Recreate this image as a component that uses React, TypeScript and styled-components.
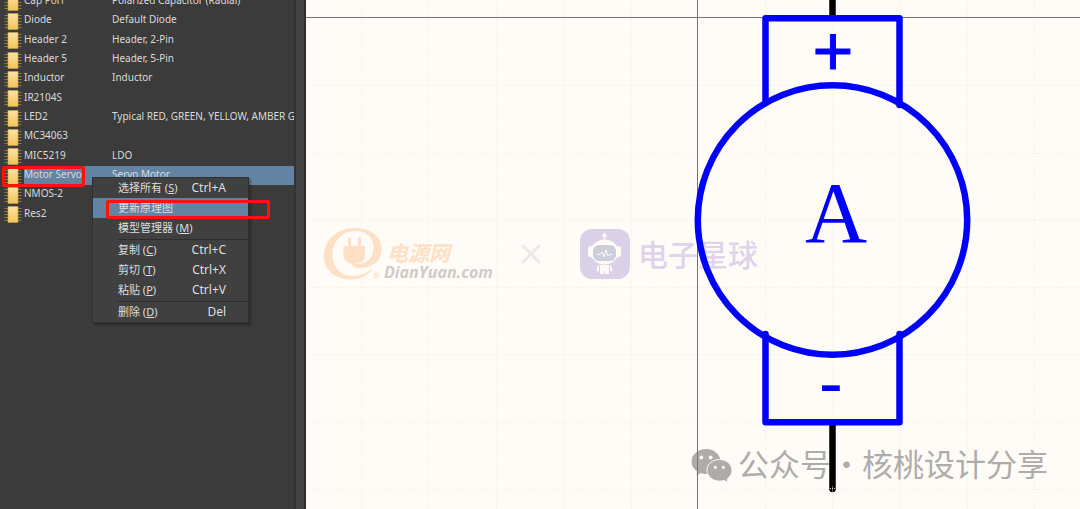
import React from "react";
import styled, { createGlobalStyle } from "styled-components";

const GlobalStyle = createGlobalStyle`
  * { box-sizing: border-box; }
  html, body, #root { height: 100%; }
  body {
    margin: 0;
    overflow: hidden;
    background: #fffcf8;
    font-family: "Noto Sans", "Noto Sans CJK SC", sans-serif;
  }
`;

const Page = styled.div`
  display: flex;
  height: 100%;
`;

const Sidebar = styled.aside`
  position: relative;
  display: flex;
  flex: none;
  width: 306px;
  background: #3b3b3b;
  border-right: 2px solid #2f2f2f;
`;

const ListPane = styled.div`
  width: 294px;
  overflow: hidden;
`;

const ScrollTrack = styled.div`
  flex: 1;
  border-left: 2px solid #333333;
  background: #424242;
`;

const PartTable = styled.table`
  width: 100%;
  height: 232px;
  margin-top: -8px;
  border-collapse: collapse;
  table-layout: fixed;
  color: #dadada;
  font-family: "Noto Sans", sans-serif;
  font-size: 10px;
  line-height: 16px;
`;

const PartRow = styled.tr<{ $selected?: boolean }>`
  td + td {
    background: ${(p) => (p.$selected ? "#6283a2" : "transparent")};
  }
`;

const Column = styled.col<{ $width?: number }>`
  width: ${(p) => (p.$width ? `${p.$width}px` : "auto")};
`;

const Cell = styled.td`
  padding: 0 0 3px;
  white-space: nowrap;
  vertical-align: middle;
`;

const IconCell = styled(Cell)`
  padding: 1px 0 0 4px;
  line-height: 0;
`;

const Callout = styled.div<{ $x: number; $y: number; $w: number; $h: number }>`
  position: absolute;
  left: ${(p) => p.$x}px;
  top: ${(p) => p.$y}px;
  width: ${(p) => p.$w}px;
  height: ${(p) => p.$h}px;
  border: 3px solid #ff1208;
  border-radius: 2px;
  pointer-events: none;
`;

const Menu = styled.div`
  position: absolute;
  left: 92px;
  top: 177px;
  width: 157px;
  border: 1px solid #303030;
  background: #404040;
  box-shadow: 2px 2px 2px rgba(0, 0, 0, 0.3);
`;

const MenuItem = styled.button<{ $active?: boolean }>`
  display: flex;
  justify-content: space-between;
  align-items: center;
  width: 100%;
  height: 20px;
  padding: 0 22px 0 25px;
  border: 0;
  background: ${(p) => (p.$active ? "#6283a2" : "transparent")};
  color: #dedede;
  font: 11px/20px "Noto Sans", "Noto Sans CJK SC", sans-serif;
  white-space: nowrap;
`;

const Shortcut = styled.span`
  font-size: 12px;
`;

const Divider = styled.hr`
  height: 1px;
  margin: 1px 0 0 25px;
  border: 0;
  background: #2d2d2d;
`;

const Canvas = styled.main`
  flex: 1;
  min-width: 0;
  overflow: hidden;
  background: #fffcf8;
`;

const Sheet = styled.svg`
  display: block;
  width: 100%;
  height: 100%;
`;

const parts: [string, string][] = [
  ["Cap Pol1", "Polarized Capacitor (Radial)"],
  ["Diode", "Default Diode"],
  ["Header 2", "Header, 2-Pin"],
  ["Header 5", "Header, 5-Pin"],
  ["Inductor", "Inductor"],
  ["IR2104S", ""],
  ["LED2", "Typical RED, GREEN, YELLOW, AMBER GaAs LED"],
  ["MC34063", ""],
  ["MIC5219", "LDO"],
  ["Motor Servo", "Servo Motor"],
  ["NMOS-2", ""],
  ["Res2", ""],
];

type Entry = { label: string; mnemonic?: string; keys?: string; active?: boolean };
const groups: Entry[][] = [
  [
    { label: "选择所有", mnemonic: "S", keys: "Ctrl+A" },
    { label: "更新原理图", active: true },
    { label: "模型管理器", mnemonic: "M" },
  ],
  [
    { label: "复制", mnemonic: "C", keys: "Ctrl+C" },
    { label: "剪切", mnemonic: "T", keys: "Ctrl+X" },
    { label: "粘贴", mnemonic: "P", keys: "Ctrl+V" },
  ],
  [{ label: "删除", mnemonic: "D", keys: "Del" }],
];

const ChipIcon = () => (
  <svg width="18" height="17" viewBox="0 0 18 17" aria-hidden="true">
    <defs>
      <linearGradient id="chip" x1="0" y1="0" x2="0" y2="1">
        <stop offset="0" stopColor="#fbe3a4" />
        <stop offset="1" stopColor="#f2c458" />
      </linearGradient>
    </defs>
    <path d="M0.500 2.500H17.500M0.500 5.500H17.500M0.500 8.500H17.500M0.500 11.500H17.500M0.500 14.500H17.500" stroke="#8f7a3c" />
    <rect x="4" y="0.500" width="10" height="16" fill="url(#chip)" stroke="#c9a24c" strokeWidth="0.6" />
  </svg>
);

const gridX = [361, 428, 496, 563, 631, 765, 832, 899, 967, 1034];
const gridY = [85, 153, 220, 287, 354, 422, 489];

const Grid = () => (
  <g stroke="#f6f4f1" strokeDasharray="2 1">
    {gridX.map((x) => <path key={x} d={`M${x}.5 0V509`} />)}
    {gridY.map((y) => <path key={y} d={`M306 ${y}.5H1080`} />)}
  </g>
);

const PlugLogo = () => (
  <g>
    <g fill="#fee0c4">
      <path
        fillRule="evenodd"
        d="M372.500 270C366 276 360 279.500 351 279.500C335 279.500 324 270 324 256C324 240 337 228 355 228C371 228 381.700 237 381.700 249C381.700 261 372 268 360 268C356 268 353 267 351.500 264H359C367 264 373.500 257 373.500 247C373.500 237 366 231 355 231C342 231 332.500 241 332.500 255C332.500 268 341 276 353 276C361 276 367 273 371.500 269Z"
      />
      <path d="M348 238.500a1.500 1.500 0 0 1 3 0V246H358V238.500a1.500 1.500 0 0 1 3 0V246H365V256C365 261 361 264 354 264C347 264 343.500 260 343.500 254V246H348Z" />
      <circle cx="376.500" cy="275.500" r="2.600" fill="none" stroke="#fee0c4" />
      <path d="M375.600 277V274H377L377.500 275L376 275.500L377.500 277" fill="none" stroke="#fee0c4" strokeWidth="0.6" />
    </g>
    <text x="387" y="261" fontFamily="'Noto Sans CJK SC', sans-serif" fontWeight="700" fontStyle="italic" fontSize="21" fill="#fee0c4">电源网</text>
    <text x="384" y="278" fontFamily="'Open Sans', sans-serif" fontWeight="700" fontStyle="italic" fontSize="16" fill="#cfcbc9">DianYuan.com</text>
  </g>
);

const RobotLogo = () => (
  <g>
    <rect x="580" y="229" width="50" height="50" rx="12" fill="#dad0e7" />
    <g fill="#fffcf8">
      <circle cx="604.500" cy="235.500" r="2.300" />
      <path d="M604 237h1v4h-1z" />
      <ellipse cx="604.500" cy="252" rx="14" ry="12.500" />
      <rect x="588" y="246" width="5" height="11" rx="2.500" />
      <rect x="616" y="246" width="5" height="11" rx="2.500" />
      <path d="M600 265H609V274H605V271H604V274H600Z" />
      <path d="M598.500 265C596.500 267 596 270 597.500 272L599 271V265ZM610.500 265C612.500 267 613 270 611.500 272L610 271V265Z" />
    </g>
    <rect x="593" y="245" width="23" height="16" rx="6" fill="#cdcddb" />
    <path d="M597 254.500H600L602 252L604 257L606 250L608 256L609.500 254.500H612" fill="none" stroke="#fffcf8" />
    <text x="638" y="266" fontFamily="'Noto Sans CJK SC', sans-serif" fontWeight="500" fontSize="30" fill="#ded3eb">电子星球</text>
  </g>
);

const AccountMark = () => (
  <g fill="#adacaa">
    <path d="M706 449C698 449 691.500 454.500 691.500 461.500C691.500 465.500 693.500 469 697 471.300L696.500 475.500L701 473C702.500 473.600 704.500 474 706 474C714 474 720.500 468.500 720.500 461.500S714 449 706 449Z" />
    <path stroke="#fffcf8" d="M719.500 459.500C712.500 459.500 707 464.300 707 470.300S712.500 481.200 719.500 481.200C721 481.200 722.700 481 724 480.500L728 482.500L727.500 478.800C730.200 476.800 732 473.800 732 470.300C732 464.300 726.500 459.500 719.500 459.500Z" />
    <g fill="#fffcf8">
      <circle cx="701.300" cy="457.500" r="1.900" />
      <circle cx="710.700" cy="457.500" r="1.900" />
      <circle cx="715.300" cy="467.300" r="1.500" />
      <circle cx="723.300" cy="467.300" r="1.500" />
    </g>
    <text x="738" y="476" fontFamily="'Noto Sans CJK SC', sans-serif" fontSize="31">公众号·核桃设计分享</text>
  </g>
);

const MotorSymbol = () => (
  <g>
    <path d="M697.500 0V509M306 17.500H1080" stroke="#777573" />
    <path d="M832.500 0V16M832.500 424V489" stroke="#000" strokeWidth="6.500" strokeLinecap="round" />
    <path d="M830 488.500H835M832.500 486.500V491.500" stroke="#fff" strokeWidth="0.8" strokeDasharray="1 1" />
    <g fill="none" stroke="#00f" strokeWidth="6.500" strokeLinecap="round" strokeLinejoin="round">
      <circle cx="832.500" cy="220" r="134.700" />
      <path d="M765.500 101V18.200H899.500V105" />
      <path d="M765.500 334V422.300H899.500V334" />
    </g>
    <g fill="#00f" textAnchor="middle">
      <text x="833" y="75" fontFamily="'Liberation Sans', sans-serif" fontSize="70" stroke="#00f" strokeWidth="1">+</text>
      <text x="836" y="242" fontFamily="'Liberation Serif', serif" fontSize="86">A</text>
      <text x="831" y="407" fontFamily="'Liberation Sans', sans-serif" fontSize="73">-</text>
    </g>
  </g>
);

export default function App() {
  return (
    <>
      <GlobalStyle />
      <Page>
        <Sidebar>
          <ListPane>
            <PartTable>
              <colgroup>
                <Column $width={24} />
                <Column $width={88} />
                <Column />
              </colgroup>
              <tbody>
                {parts.map(([name, description]) => (
                  <PartRow key={name} $selected={name === "Motor Servo"}>
                    <IconCell><ChipIcon /></IconCell>
                    <Cell>{name}</Cell>
                    <Cell>{description}</Cell>
                  </PartRow>
                ))}
              </tbody>
            </PartTable>
          </ListPane>
          <ScrollTrack />
          <Menu role="menu">
            {groups.map((group, i) => (
              <React.Fragment key={i}>
                {i > 0 && <Divider />}
                {group.map((item) => (
                  <MenuItem key={item.label} role="menuitem" $active={item.active}>
                    <span>
                      {item.label}
                      {item.mnemonic && <> (<u>{item.mnemonic}</u>)</>}
                    </span>
                    {item.keys && <Shortcut>{item.keys}</Shortcut>}
                  </MenuItem>
                ))}
              </React.Fragment>
            ))}
          </Menu>
          <Callout $x={2} $y={166} $w={83} $h={21} />
          <Callout $x={106} $y={200} $w={164} $h={19} />
        </Sidebar>
        <Canvas>
          <Sheet viewBox="306 0 774 509" preserveAspectRatio="xMinYMin slice">
            <Grid />
            <PlugLogo />
            <path d="M522 245L540 263M540 245L522 263" stroke="#eceae8" strokeWidth="3" />
            <RobotLogo />
            <AccountMark />
            <MotorSymbol />
          </Sheet>
        </Canvas>
      </Page>
    </>
  );
}
